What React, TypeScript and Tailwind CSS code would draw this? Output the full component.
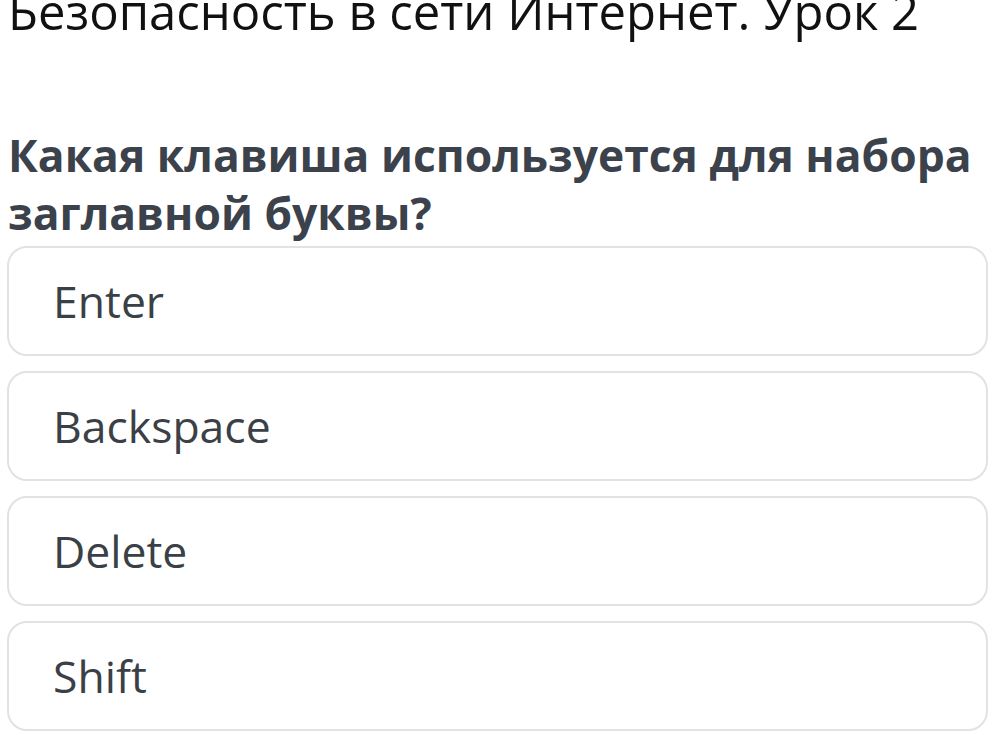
import React from "react";

const options = ["Enter", "Backspace", "Delete", "Shift"];

export default function App() {
  return (
    <div
      className="w-[993px] h-[735px] overflow-hidden bg-white"
      style={{ fontFamily: '"Open Sans", "Noto Sans", sans-serif' }}
    >
      <div className="pl-[7px] pr-[5px] mt-[-19px]">
        <h1 className="text-[49px] leading-[60px] text-[#111] font-normal pl-[1px] whitespace-nowrap">
          Безопасность в сети Интернет. Урок 2
        </h1>
        <h2 className="mt-[85px] text-[44.4px] leading-[58px] font-bold text-[#3b424b] pl-[1px]">
          Какая клавиша используется для набора заглавной буквы?
        </h2>
        <div className="mt-[4px] flex flex-col gap-[15px]">
          {options.map((o) => (
            <div
              key={o}
              className="h-[110px] rounded-[20px] border-2 border-[#e2e2e2] flex items-center pl-[44px] text-[44.5px] text-[#3b3f46]"
            >
              {o}
            </div>
          ))}
        </div>
      </div>
    </div>
  );
}
